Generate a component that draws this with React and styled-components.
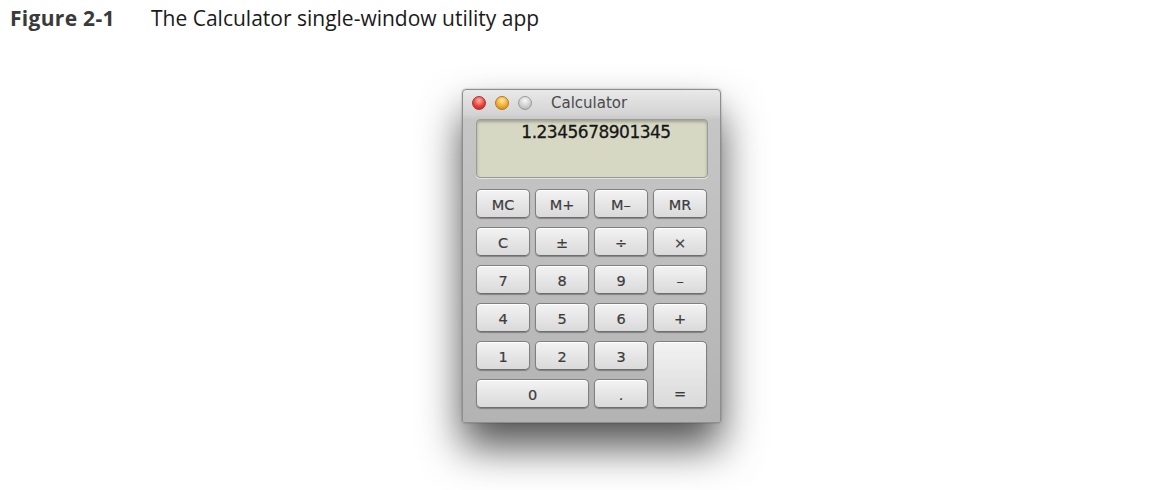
import React from 'react';
import styled, { createGlobalStyle } from 'styled-components';

const Global = createGlobalStyle`
    body {
        margin: 0;
        background: #fff;
    }
`;

const Page = styled.div`
    width: 1164px;
    height: 490px;
    overflow: hidden;
    background: #fff;
`;

const Caption = styled.div`
    display: flex;
    align-items: baseline;
    padding: 4px 0 0 10px;
    font-family: "Open Sans", "Noto Sans", sans-serif;
    font-size: 21px;
    line-height: 29px;
    color: #1a1a1a;
    b {
        width: 141px;
        color: #3a3a3a;
        font-weight: 700;
        letter-spacing: 0.3px;
    }
`;

const Stage = styled.div`
    padding: 56px 0 0 462px;
`;

const Window = styled.div`
    box-sizing: border-box;
    width: 259px;
    height: 334px;
    border: 1px solid #8e8e8e;
    border-radius: 4px 4px 2px 2px;
    background: linear-gradient(#e9e9e9 0px, #d4d4d4 24px, #c6c6c6 30px, #bababa 70%, #b3b3b3 100%);
    box-shadow: 0 24px 42px rgba(0, 0, 0, 0.68), 0 0 2px rgba(0, 0, 0, 0.35);
    padding: 0 14px 0 13px;
`;

const TitleBar = styled.div`
    display: flex;
    align-items: center;
    height: 26px;
    margin: 0 -4px 0 -4px;
`;

const Light = styled.span`
    width: 14px;
    height: 14px;
    border-radius: 50%;
    margin-right: 9px;
    box-sizing: border-box;
    border: 1px solid ${p => p.edge};
    background: radial-gradient(circle at 50% 30%, ${p => p.hi} 0%, ${p => p.color} 55%, ${p => p.lo} 100%);
`;

const Title = styled.span`
    margin-left: 10px;
    font-family: "DejaVu Sans", "Liberation Sans", sans-serif;
    font-size: 15px;
    color: #4a4a4a;
`;

const Display = styled.div`
    box-sizing: border-box;
    height: 59px;
    margin: 3px -2px 0 0;
    border-radius: 4px;
    background: #d6d8c4;
    border: 1px solid #9c9c94;
    box-shadow: inset 0 2px 3px rgba(0, 0, 0, 0.25), 0 1px 0 rgba(255, 255, 255, 0.5);
    text-align: center;
    padding: 2px 0 0 8px;
    font-family: "DejaVu Sans", "Liberation Sans", sans-serif;
    font-size: 17px;
    letter-spacing: -0.5px;
    color: #161616;
    -webkit-text-stroke: 0.3px #161616;
`;

const Keys = styled.div`
    display: grid;
    grid-template-columns: repeat(4, 54px);
    grid-auto-rows: 29px;
    column-gap: 5px;
    row-gap: 9px;
    margin-top: 11px;
`;

const Key = styled.button`
    box-sizing: border-box;
    margin: 0;
    padding: ${p => (p.tall ? '0 0 5px' : '2px 0 0')};
    display: flex;
    align-items: ${p => (p.tall ? 'flex-end' : 'center')};
    justify-content: center;
    grid-column: span ${p => p.cols || 1};
    grid-row: span ${p => p.rows || 1};
    border: 1px solid #808080;
    border-bottom-color: #6e6e6e;
    border-radius: 5px;
    background: linear-gradient(#f3f3f3, #e6e6e6 50%, #dadada);
    box-shadow: inset 0 1px 0 #fff, 0 1px 1px rgba(0, 0, 0, 0.3);
    font-family: "DejaVu Sans", "Liberation Sans", sans-serif;
    font-size: 14.5px;
    color: #3c3c3c;
    -webkit-text-stroke: 0.2px #3c3c3c;
`;

const keys = [
    ['MC'], ['M+'], ['M\u2013'], ['MR'],
    ['C'], ['\u00b1'], ['\u00f7'], ['\u00d7'],
    ['7'], ['8'], ['9'], ['\u2013'],
    ['4'], ['5'], ['6'], ['+'],
    ['1'], ['2'], ['3'], ['=', { rows: 2, tall: true }],
    ['0', { cols: 2 }], ['.'],
];

export default function App() {
    return (
        <Page>
            <Global />
            <Caption>
                <b>Figure 2-1</b>
                <span>The Calculator single-window utility app</span>
            </Caption>
            <Stage>
                <Window>
                    <TitleBar>
                        <Light color="#ec3f38" hi="#ffb3ad" lo="#b3201a" edge="#a8352f" />
                        <Light color="#f3ad2a" hi="#ffe7a6" lo="#c27d0c" edge="#b07a20" />
                        <Light color="#cfcfcf" hi="#f8f8f8" lo="#a9a9a9" edge="#999" />
                        <Title>Calculator</Title>
                    </TitleBar>
                    <Display>1.2345678901345</Display>
                    <Keys>
                        {keys.map(([label, opts = {}], i) => (
                            <Key key={i} {...opts}>{label}</Key>
                        ))}
                    </Keys>
                </Window>
            </Stage>
        </Page>
    );
}
